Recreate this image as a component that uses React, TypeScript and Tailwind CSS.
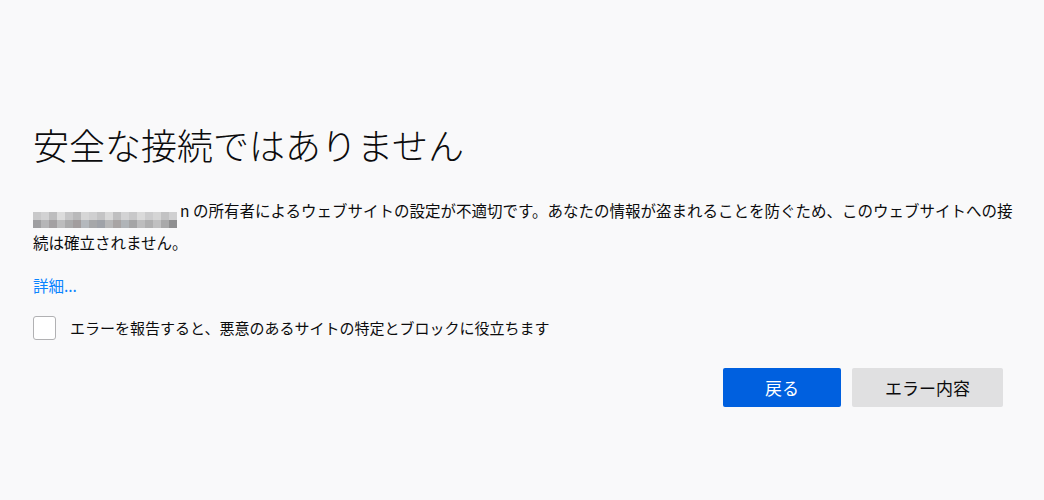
import React from 'react';

const mosaicTop = ['#c9c9ca', '#d2d2d3', '#bdbdbe', '#dcdcdc', '#c6c6c7', '#b9b9ba', '#d6d6d6', '#cfcfd0', '#c4c4c5', '#d9d9d9', '#bfbfc0', '#d3d3d4', '#c8c8c9', '#dadada', '#cccccd', '#d5d5d5', '#c2c2c3', '#d0d0d1'];
const mosaicBottom = ['#9f9fa1', '#b5b5b7', '#a3a0a2', '#bcbcbd', '#aaaaab', '#a29d9e', '#b4b8bd', '#a6a7a9', '#9fa2a8', '#b7b7b8', '#a8a4a4', '#b0b4b8', '#a5a5a6', '#bdbdbe', '#afafb0', '#c0c0c1', '#a9a9aa', '#8f8f90'];

const font = { fontFamily: '"Noto Sans CJK JP", "Noto Sans", sans-serif' };

const BlurredHost: React.FC = () => (
    <span className="inline-flex flex-col align-[-3px] mr-[3px]">
        <span className="flex">
            {mosaicTop.map((c, i) => (
                <span key={i} className="w-[8px] h-[8px]" style={{ background: c }} />
            ))}
        </span>
        <span className="flex">
            {mosaicBottom.map((c, i) => (
                <span key={i} className="w-[8px] h-[8px]" style={{ background: c }} />
            ))}
        </span>
    </span>
);

const App: React.FC = () => {
    return (
        <div className="w-[1044px] h-[500px] bg-[#f9f9fa] text-[#0c0c0d]" style={font}>
            <div className="pl-[33px] pr-[28px] pt-[112px]">
                <h1 className="text-[36px] font-light leading-[64px]">
                    安全な接続ではありません
                </h1>
                <p className="mt-[20px] text-[15.5px] leading-[28px]">
                    <BlurredHost />n の所有者によるウェブサイトの設定が不適切です。あなたの情報が盗まれることを防ぐため、このウェブサイトへの接続は確立されません。
                </p>
                <a className="block mt-[17px] text-[15.5px] leading-[24px] text-[#0a84ff] cursor-pointer">
                    詳細...
                </a>
                <label className="flex items-center mt-[19px] gap-[14px] text-[15px]">
                    <span className="w-[23px] h-[24px] rounded-[3px] border border-[#b1b1b3] bg-white" />
                    <span>エラーを報告すると、悪意のあるサイトの特定とブロックに役立ちます</span>
                </label>
                <div className="flex justify-end gap-[11px] mt-[28px] pr-[13px]">
                    <button className="w-[118px] h-[39px] rounded-[2px] bg-[#0060df] text-white text-[17px]">
                        戻る
                    </button>
                    <button className="w-[151px] h-[39px] rounded-[2px] bg-[#e0e0e1] text-[#0c0c0d] text-[17px]">
                        エラー内容
                    </button>
                </div>
            </div>
        </div>
    );
};

export default App;
